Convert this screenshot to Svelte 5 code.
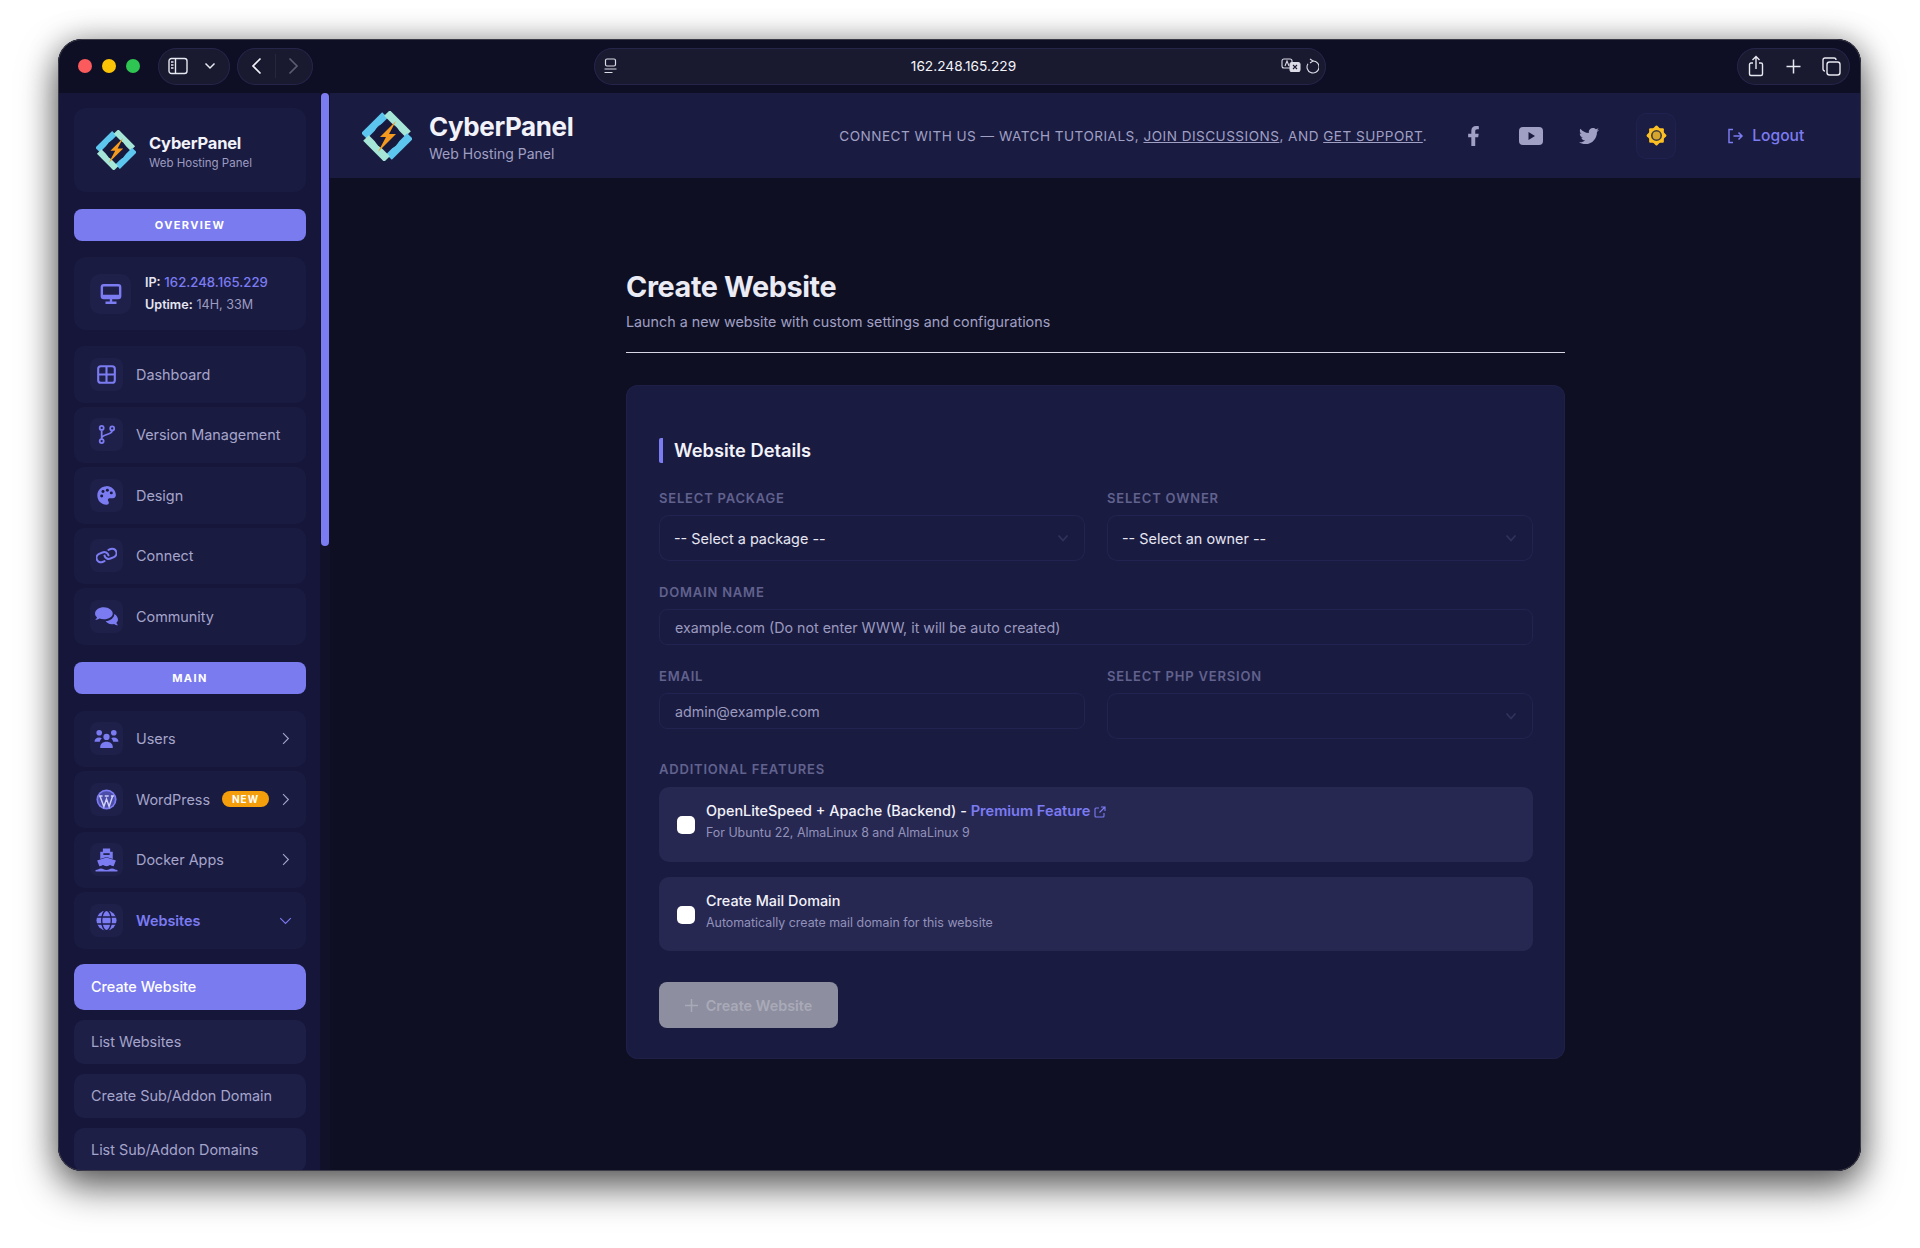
<script>
  const accent = "#7b7bf2";

  const overview = [
    { label: "Dashboard", icon: "dashboard" },
    { label: "Version Management", icon: "branch" },
    { label: "Design", icon: "palette" },
    { label: "Connect", icon: "link" },
    { label: "Community", icon: "comments" },
  ];

  const main = [
    { label: "Users", icon: "users", arrow: "right" },
    { label: "WordPress", icon: "wordpress", arrow: "right", badge: "NEW" },
    { label: "Docker Apps", icon: "ship", arrow: "right" },
    { label: "Websites", icon: "globe", arrow: "down", open: true },
  ];

  const subItems = [
    { label: "Create Website", active: true },
    { label: "List Websites" },
    { label: "Create Sub/Addon Domain" },
    { label: "List Sub/Addon Domains" },
  ];
</script>

{#snippet logo(size)}
  <svg width={size} height={size} viewBox="0 0 50 50" aria-hidden="true">
    <path d="M2 25 23 4" stroke="#5cc6ee" stroke-width="8" />
    <path d="M25 2 46 23" stroke="#a6e6d6" stroke-width="8" />
    <path d="M48 25 27 46" stroke="#5cc6ee" stroke-width="8" />
    <path d="M4 27 25 48" stroke="#a6e6d6" stroke-width="8" />
    <circle cx="25" cy="25" r="13" fill="#171a3c" />
    <path d="M34 10 18 26h6l-8 15 18-18h-7z" fill="#f59a1e" />
  </svg>
{/snippet}

{#snippet navIcon(name)}
  <svg class="glyph" class:large={name === "users" || name === "comments" || name === "ship"} viewBox="0 0 24 24" aria-hidden="true">
    {#if name === "dashboard"}
      <g fill="none" stroke={accent} stroke-width="2.4">
        <rect x="2.5" y="2.5" width="19" height="19" rx="3" />
        <path d="M12 2.5v19M2.5 12h19" />
      </g>
    {:else if name === "branch"}
      <g fill="none" stroke={accent} stroke-width="2">
        <circle cx="6.5" cy="4.5" r="2.3" />
        <circle cx="6.5" cy="19.5" r="2.3" />
        <circle cx="18.5" cy="5" r="2.3" />
        <path d="M6.5 7v10M18.5 7.5c0 5.5-12 3.5-12 9" />
      </g>
    {:else if name === "palette"}
      <path
        fill={accent}
        d="M12 1.5C6 1.5 1.5 6.2 1.5 12S6 22.5 12 22.5c1.8 0 2.7-1 2.7-2.3 0-1.5-1.1-1.9-1.1-3.2 0-1.2 1-1.9 2.2-1.9h3.4c2.2 0 3.5-1.4 3.5-3.7 0-5.7-4.9-10.4-10.7-10.4z"
      />
      <g fill="#1a1b3f">
        <circle cx="6.5" cy="12.5" r="1.7" />
        <circle cx="8" cy="7.5" r="1.7" />
        <circle cx="13" cy="6" r="1.7" />
        <circle cx="17.5" cy="9" r="1.7" />
      </g>
    {:else if name === "link"}
      <g fill="none" stroke={accent} stroke-width="2.4" stroke-linecap="round" transform="rotate(22 12 12)">
        <path d="M10 13a5 5 0 0 0 7.54.54l3-3a5 5 0 0 0-7.07-7.07l-1.72 1.71" />
        <path d="M14 11a5 5 0 0 0-7.54-.54l-3 3a5 5 0 0 0 7.07 7.07l1.71-1.71" />
      </g>
    {:else if name === "comments"}
      <path
        fill={accent}
        d="M9.5 3C4.8 3 1 5.6 1 9c0 1.5.7 2.8 1.9 3.8-.3 1-1 1.8-1.8 2.5 1.7 0 3.1-.6 4.2-1.3 1.2.4 2.6.6 4.2.6 4.7 0 8.5-2.6 8.5-5.6S14.2 3 9.5 3z"
      />
      <path
        fill={accent}
        d="M19.5 9.5c0 3.7-3.7 6.5-8.3 6.9 1 1.9 3.2 3.1 5.8 3.1.8 0 1.6-.1 2.3-.3.9.7 2.2 1.2 3.7 1.2-.7-.6-1.3-1.4-1.5-2.3 1-.9 1.5-2 1.5-3.2 0-2.3-1.3-4.2-3.5-5.4z"
      />
    {:else if name === "users"}
      <g fill={accent}>
        <circle cx="5" cy="6.5" r="2.7" />
        <circle cx="19" cy="6.5" r="2.7" />
        <circle cx="12" cy="10.5" r="3" />
        <path d="M.5 15c0-2.2 1.7-4 4.5-4 1 0 1.9.2 2.5.7-1.1 1-1.7 2.2-1.9 3.3z" />
        <path d="M23.5 15c0-2.2-1.7-4-4.5-4-1 0-1.9.2-2.5.7 1.1 1 1.7 2.2 1.9 3.3z" />
        <path d="M6 20c0-2.9 2.3-5 6-5s6 2.1 6 5v1H6z" />
      </g>
    {:else if name === "wordpress"}
      <circle cx="12" cy="12" r="11.5" fill={accent} />
      <circle cx="12" cy="12" r="9.5" fill="#4b4ba8" />
      <path d="M4.5 8 9 20l3-8.5L15 20l4-12M3.5 8h4M10 8h4.5M17 8h3.5" fill="none" stroke="#cfcff8" stroke-width="1.7" />
    {:else if name === "ship"}
      <g fill={accent}>
        <path d="M8.5 1.5h7v3H18v7L12 9.5 6 11.5v-7h2.5z" />
        <path d="M3 13 12 10l9 3-2.2 5.5c-1.8 0-2.4-1.2-3.4-1.2s-1.700 1.2-3.4 1.2-2.4-1.2-3.4-1.2-1.600 1.2-3.4 1.2z" />
        <path d="M1.5 22c2.5 0 3-1.3 5.2-1.3S9.5 22 12 22s3-1.3 5.3-1.3 2.7 1.3 5.2 1.3v1.5H1.5z" />
      </g>
      <path d="M9 6.8h6" stroke="#1a1b3f" stroke-width="1.6" />
    {:else if name === "globe"}
      <circle cx="12" cy="12" r="11.5" fill={accent} />
      <g fill="none" stroke="#1d1d48" stroke-width="1.5">
        <ellipse cx="12" cy="12" rx="5.5" ry="11.5" />
        <path d="M.5 8h23M.5 16h23" />
      </g>
    {/if}
  </svg>
{/snippet}

{#snippet chevron(direction)}
  <svg class="chev" viewBox="0 0 16 16" fill="none" stroke="currentColor" stroke-width="1.4" aria-hidden="true">
    {#if direction === "down"}
      <path d="M1.5 5 8 11.5 14.5 5" />
    {:else}
      <path d="M5 1.5 11.5 8 5 14.5" />
    {/if}
  </svg>
{/snippet}

{#snippet selectArrow()}
  <svg class="select-arrow" viewBox="0 0 14 14" fill="none" stroke="#31325c" stroke-width="1.8" aria-hidden="true">
    <path d="M2.5 4.5 7 9.5l4.5-5" />
  </svg>
{/snippet}

<div class="page">
  <div class="window">
    <div class="toolbar">
      <div class="lights">
        <span class="light red"></span>
        <span class="light yellow"></span>
        <span class="light green"></span>
      </div>

      <div class="pill pill-side">
        <svg width="20" height="18" viewBox="0 0 20 18" fill="none" stroke="#e8e8f0" stroke-width="1.4">
          <rect x="1" y="1.5" width="18" height="15" rx="2.5" />
          <path d="M7.5 1.5v15M3 5h2.5M3 8h2.5M3 11h2.5" />
        </svg>
        <svg width="12" height="8" viewBox="0 0 12 8" fill="none" stroke="#e8e8f0" stroke-width="1.5">
          <path d="M1.5 1.5 6 6l4.5-4.5" />
        </svg>
      </div>

      <div class="pill pill-nav">
        <svg width="11" height="18" viewBox="0 0 11 18" fill="none" stroke="#f0f0f6" stroke-width="1.7">
          <path d="M9.5 1.5 2 9l7.5 7.5" />
        </svg>
        <span class="pill-sep"></span>
        <svg width="11" height="18" viewBox="0 0 11 18" fill="none" stroke="#5b5c72" stroke-width="1.7">
          <path d="M1.5 1.5 9 9l-7.5 7.5" />
        </svg>
      </div>

      <div class="pill url">
        <svg width="13" height="16" viewBox="0 0 13 16" fill="none" stroke="#dcdce6" stroke-width="1.2">
          <rect x="1.5" y="1" width="10" height="7" rx="1.5" />
          <path d="M.5 11h12M.5 14.5h8" />
        </svg>
        <span class="url-text">162.248.165.229</span>
        <svg width="38" height="18" viewBox="0 0 38 18" fill="none" stroke="#dcdce6" stroke-width="1.1">
          <rect x="1" y="2" width="10" height="9" rx="2" />
          <path d="M4 9l2-5 2 5" />
          <rect x="9" y="5.5" width="10" height="9" rx="2" fill="#dcdce6" />
          <path d="M12 8l4 4M16 8l-4 4" stroke="#1b1b33" />
          <path d="M32 4a6 6 0 1 1-5 2.700" />
          <path d="M29 2l3 2-3 2" />
        </svg>
      </div>

      <div class="pill pill-tabs">
        <svg width="16" height="22" viewBox="0 0 16 22" fill="none" stroke="#e8e8f0" stroke-width="1.4">
          <path d="M5 8H3a1.5 1.5 0 0 0-1.5 1.5V19A1.5 1.5 0 0 0 3 20.5h10a1.5 1.5 0 0 0 1.5-1.500V9.500A1.500 1.500 0 0 0 13 8h-2" />
          <path d="M8 14V1.5M4.500 5 8 1.500 11.500 5" />
        </svg>
        <svg width="15" height="15" viewBox="0 0 15 15" fill="none" stroke="#e8e8f0" stroke-width="1.5">
          <path d="M7.5 .5v14M.5 7.5h14" />
        </svg>
        <svg width="19" height="19" viewBox="0 0 19 19" fill="none" stroke="#e8e8f0" stroke-width="1.4">
          <rect x="5" y="5" width="13" height="13" rx="2.5" />
          <path d="M3 14a2 2 0 0 1-2-2V3a2 2 0 0 1 2-2h9a2 2 0 0 1 2 2" />
        </svg>
      </div>
    </div>

    <div class="body">
      <aside class="sidebar">
        <div class="brand-card">
          {@render logo(40)}
          <div class="brand-text">
            <div class="brand-name">CyberPanel</div>
            <div class="brand-sub">Web Hosting Panel</div>
          </div>
        </div>

        <div class="section-btn">OVERVIEW</div>

        <div class="server-card">
          <div class="server-icon">
            <svg width="22" height="22" viewBox="0 0 24 24" fill="none" stroke={accent} stroke-width="2.6">
              <rect x="2" y="2.5" width="20" height="14" rx="2" />
              <path d="M12 17v4M6 21.5h12M2 14h20" />
            </svg>
          </div>
          <div class="server-text">
            <div><b>IP:</b> <span class="ip">162.248.165.229</span></div>
            <div><b>Uptime:</b> <span class="uptime">14H, 33M</span></div>
          </div>
        </div>

        <nav class="nav">
          {#each overview as item}
            <div class="nav-item">
              <span class="nav-icon">{@render navIcon(item.icon)}</span>
              <span class="nav-label">{item.label}</span>
            </div>
          {/each}
        </nav>

        <div class="section-btn">MAIN</div>

        <nav class="nav">
          {#each main as item}
            <div class="nav-item" class:open={item.open}>
              <span class="nav-icon">{@render navIcon(item.icon)}</span>
              <span class="nav-label">{item.label}</span>
              {#if item.badge}
                <span class="badge">{item.badge}</span>
              {/if}
              {@render chevron(item.arrow)}
            </div>
          {/each}
        </nav>

        <div class="sub-nav">
          {#each subItems as sub}
            <div class="sub-item" class:active={sub.active}>{sub.label}</div>
          {/each}
        </div>
      </aside>

      <div class="track"><div class="thumb"></div></div>

      <div class="content">
        <header class="topbar">
          <div class="top-brand">
            {@render logo(50)}
            <div class="top-text">
              <div class="top-name">CyberPanel</div>
              <div class="top-sub">Web Hosting Panel</div>
            </div>
          </div>

          <p class="connect">
            CONNECT WITH US — WATCH TUTORIALS, <a href="#top">JOIN DISCUSSIONS</a>, AND <a href="#top">GET SUPPORT</a>.
          </p>

          <svg class="social fb" viewBox="0 0 320 512" aria-hidden="true">
            <path d="M279.14 288l14.22-92.66h-88.91v-60.13c0-25.35 12.42-50.06 52.24-50.06h40.42V6.26S260.43 0 225.36 0c-73.22 0-121.08 44.38-121.08 124.72v70.62H22.89V288h81.39v224h100.17V288z" />
          </svg>
          <svg class="social yt" viewBox="0 0 24 18" aria-hidden="true">
            <path fill-rule="evenodd" d="M4 0h16a4 4 0 0 1 4 4v10a4 4 0 0 1-4 4H4a4 4 0 0 1-4-4V4a4 4 0 0 1 4-4zm5.5 5v8l6.5-4z" />
          </svg>
          <svg class="social tw" viewBox="0 0 512 512" aria-hidden="true">
            <path d="M459.37 151.716c.325 4.548.325 9.097.325 13.645 0 138.72-105.583 298.558-298.558 298.558-59.452 0-114.68-17.219-161.137-47.106 8.447.974 16.568 1.299 25.34 1.299 49.055 0 94.213-16.568 130.274-44.832-46.132-.975-84.792-31.188-98.112-72.772 6.498.974 12.995 1.624 19.818 1.624 9.421 0 18.843-1.3 27.614-3.573-48.081-9.747-84.143-51.98-84.143-102.985v-1.299c13.969 7.797 30.214 12.67 47.431 13.319-28.264-18.843-46.781-51.005-46.781-87.391 0-19.492 5.197-37.36 14.294-52.954 51.655 63.675 129.3 105.258 216.365 109.807-1.624-7.797-2.599-15.918-2.599-24.04 0-57.828 46.782-104.934 104.934-104.934 30.213 0 57.502 12.67 76.67 33.137 23.715-4.548 46.456-13.32 66.599-25.34-7.798 24.366-24.366 44.833-46.132 57.827 21.117-2.273 41.584-8.122 60.426-16.243-14.292 20.791-32.161 39.308-52.628 54.253z" />
          </svg>

          <div class="theme-btn">
            <svg width="21" height="21" viewBox="0 0 20 20" aria-hidden="true">
              <g fill="#fbbf24">
                <rect x="3" y="3" width="14" height="14" rx="1" />
                <rect x="3" y="3" width="14" height="14" rx="1" transform="rotate(45 10 10)" />
              </g>
              <circle cx="10" cy="10" r="5.2" fill="#3a3a3e" />
              <circle cx="10" cy="10" r="3.7" fill="#d5a52e" />
            </svg>
          </div>

          <div class="logout">
            <svg width="17" height="16" viewBox="0 0 17 16" fill="none" stroke={accent} stroke-width="1.5">
              <path d="M6 1.5H2v13h4M6.5 8H15M11.5 4.5 15 8l-3.5 3.5" />
            </svg>
            <span>Logout</span>
          </div>
        </header>

        <main class="main">
          <div class="wrap">
            <h1>Create Website</h1>
            <p class="subtitle">Launch a new website with custom settings and configurations</p>
            <hr />

            <section class="card">
              <h2>Website Details</h2>

              <div class="grid">
                <div class="field">
                  <label for="pkg">SELECT PACKAGE</label>
                  <div class="select" id="pkg">-- Select a package --{@render selectArrow()}</div>
                </div>
                <div class="field">
                  <label for="owner">SELECT OWNER</label>
                  <div class="select" id="owner">-- Select an owner --{@render selectArrow()}</div>
                </div>
                <div class="field wide">
                  <label for="domain">DOMAIN NAME</label>
                  <input id="domain" type="text" placeholder="example.com (Do not enter WWW, it will be auto created)" />
                </div>
                <div class="field">
                  <label for="email">EMAIL</label>
                  <input id="email" type="text" placeholder="admin@example.com" />
                </div>
                <div class="field">
                  <label for="php">SELECT PHP VERSION</label>
                  <div class="select" id="php">{@render selectArrow()}</div>
                </div>
              </div>

              <div class="features">
                <div class="features-label">ADDITIONAL FEATURES</div>
                <div class="feature">
                  <input type="checkbox" />
                  <div class="feature-text">
                    <div class="feature-title">
                      OpenLiteSpeed + Apache (Backend) - <a href="#top">Premium Feature</a>
                      <svg width="12" height="12" viewBox="0 0 12 12" fill="none" stroke={accent} stroke-width="1.1">
                        <path d="M5 2H2a1 1 0 0 0-1 1v7a1 1 0 0 0 1 1h7a1 1 0 0 0 1-1V7M7 1h4v4M11 1 5.5 6.5" />
                      </svg>
                    </div>
                    <div class="feature-sub">For Ubuntu 22, AlmaLinux 8 and AlmaLinux 9</div>
                  </div>
                </div>
                <div class="feature">
                  <input type="checkbox" />
                  <div class="feature-text">
                    <div class="feature-title">Create Mail Domain</div>
                    <div class="feature-sub">Automatically create mail domain for this website</div>
                  </div>
                </div>
              </div>

              <button class="submit" disabled>
                <svg width="13" height="13" viewBox="0 0 13 13" fill="none" stroke="#a9aab8" stroke-width="1.5">
                  <path d="M6.5 0v13M0 6.5h13" />
                </svg>
                Create Website
              </button>
            </section>
          </div>
        </main>
      </div>
    </div>
  </div>
</div>

<style>
  :global(body) {
    background: #fff;
    font-family: Inter, "Liberation Sans", sans-serif;
  }

  .page {
    height: 1248px;
    padding: 39px 59px 77px 58px;
    box-sizing: border-box;
    overflow: hidden;
  }

  .window {
    position: relative;
    height: 100%;
    display: flex;
    flex-direction: column;
    overflow: hidden;
    border-radius: 24px;
    background: #0f0f23;
    box-shadow:
      0 16px 38px rgba(0, 0, 0, 0.6),
      0 0 30px rgba(0, 0, 0, 0.25);
  }

  /* hairline round the window, over everything */
  .window::after {
    content: "";
    position: absolute;
    inset: 0;
    border: 1px solid #3b3b48;
    border-radius: 24px;
    pointer-events: none;
  }

  /* browser chrome */
  .toolbar {
    flex: 0 0 54px;
    display: flex;
    align-items: center;
    padding: 0 11px 0 20px;
    background: #0e0e24;
    box-sizing: border-box;
  }

  .lights {
    display: flex;
    gap: 10px;
    margin-right: 18px;
  }

  .light {
    width: 14px;
    height: 14px;
    border-radius: 50%;
  }

  .red { background: #fb5b5d; }
  .yellow { background: #fcc406; }
  .green { background: #2fc552; }

  .pill {
    height: 37px;
    display: flex;
    align-items: center;
    border-radius: 19px;
    box-sizing: border-box;
    background: #191930;
    box-shadow: inset 0 0 0 1px #25254a;
  }

  .pill-side {
    width: 72px;
    padding: 0 14px 0 10px;
    justify-content: space-between;
    margin-right: 7px;
  }

  .pill-nav {
    width: 76px;
    padding: 0 14px;
    justify-content: space-between;
  }

  .pill-sep {
    width: 1px;
    height: 24px;
    background: #26263f;
  }

  .url {
    flex: 0 0 732px;
    margin-left: 281px;
    padding: 0 7px 0 10px;
    justify-content: space-between;
  }

  .url-text {
    margin-left: 29px;
    color: #f4f4f8;
    font-size: 13.7px;
  }

  .pill-tabs {
    width: 113px;
    padding: 0 9px 0 11px;
    margin-left: auto;
    justify-content: space-between;
  }

  /* layout */
  .body {
    flex: 1;
    min-height: 0;
    display: flex;
  }

  .sidebar {
    flex: 0 0 262px;
    box-sizing: border-box;
    padding: 15px 14px 0 16px;
    background: #16163a;
    overflow: hidden;
  }

  .track {
    flex: 0 0 10px;
    background: #11112a;
  }

  .thumb {
    width: 8px;
    height: 453px;
    margin: 0 1px;
    border-radius: 4px;
    background: #7b7bf2;
  }

  .content {
    flex: 1;
    min-width: 0;
    display: flex;
    flex-direction: column;
  }

  /* sidebar */
  .brand-card {
    height: 84px;
    display: flex;
    align-items: center;
    gap: 13px;
    padding-left: 22px;
    box-sizing: border-box;
    border-radius: 12px;
    background: #1a1b41;
  }

  .brand-text {
    padding-top: 4px;
  }

  .brand-name {
    color: #f2f2fa;
    font-size: 16.5px;
    font-weight: 700;
    line-height: 20px;
    letter-spacing: -0.2px;
  }

  .brand-sub {
    margin-top: 2px;
    color: #9c9cc0;
    font-size: 11.5px;
    line-height: 16px;
  }

  .section-btn {
    height: 32px;
    margin: 17px 0 16px;
    display: flex;
    align-items: center;
    justify-content: center;
    border-radius: 8px;
    background: #7a7bef;
    color: #fff;
    font-size: 11px;
    font-weight: 700;
    letter-spacing: 1.4px;
  }

  .section-btn + .nav {
    margin-top: 17px;
  }

  .server-card {
    height: 73px;
    margin-bottom: 16px;
    display: flex;
    align-items: center;
    gap: 14px;
    padding-left: 16px;
    box-sizing: border-box;
    border-radius: 12px;
    background: #1a1b41;
  }

  .server-icon {
    width: 41px;
    height: 40px;
    display: flex;
    align-items: center;
    justify-content: center;
    border-radius: 10px;
    background: #1f2049;
  }

  .server-text {
    color: #e6e6f2;
    font-size: 13.2px;
    line-height: 20.5px;
  }

  .server-text b {
    font-weight: 600;
    font-size: 12.6px;
  }

  .ip {
    color: #7b7bf2;
    font-weight: 500;
  }

  .uptime {
    color: #9c9cc0;
    font-size: 12.6px;
  }

  .nav {
    display: flex;
    flex-direction: column;
    gap: 4px;
  }

  .nav-item {
    height: 56.5px;
    display: flex;
    align-items: center;
    padding: 0 14px 0 16px;
    box-sizing: border-box;
    border-radius: 10px;
    background: #1a1b41;
    color: #a5a5cb;
    font-size: 14.4px;
  }

  .nav-icon {
    width: 33px;
    height: 33px;
    flex: none;
    display: flex;
    align-items: center;
    justify-content: center;
    margin-right: 13px;
    border-radius: 8px;
    background: #1f2049;
  }

  .glyph {
    width: 21px;
    height: 21px;
  }

  .glyph.large {
    width: 25px;
    height: 25px;
  }

  .nav-label {
    flex: 1;
    white-space: nowrap;
  }

  .nav-item.open .nav-label {
    color: #7b7bf2;
    font-weight: 600;
  }

  .chev {
    width: 13px;
    height: 13px;
    flex: none;
  }

  .nav-item.open .chev {
    color: #7b7bf2;
  }

  .badge {
    width: 47px;
    height: 16px;
    margin-right: 10px;
    display: flex;
    align-items: center;
    justify-content: center;
    border-radius: 8px;
    background: #f59e0b;
    color: #fff;
    font-size: 10px;
    font-weight: 700;
    letter-spacing: 1px;
  }

  .sub-nav {
    margin-top: 15px;
    display: flex;
    flex-direction: column;
    gap: 10px;
  }

  .sub-item {
    height: 44px;
    padding-left: 17px;
    display: flex;
    align-items: center;
    flex: none;
    border-radius: 10px;
    background: #1e1f47;
    color: #a5a5cb;
    font-size: 14.4px;
  }

  .sub-item.active {
    height: 46px;
    background: #7a7bef;
    color: #fff;
    font-weight: 500;
  }

  /* header */
  .topbar {
    flex: 0 0 85px;
    display: flex;
    align-items: center;
    padding-left: 32px;
    box-sizing: border-box;
    background: #1a1b41;
  }

  .top-brand {
    display: flex;
    align-items: center;
    gap: 17px;
  }

  .top-text {
    padding-top: 2px;
  }

  .top-name {
    color: #f2f2fa;
    font-size: 26px;
    font-weight: 700;
    line-height: 32px;
    letter-spacing: -0.4px;
  }

  .top-sub {
    margin-top: 2px;
    color: #a0a0c4;
    font-size: 14px;
    line-height: 18px;
  }

  .connect {
    margin: 0 0 0 266px;
    color: #a0a0c4;
    font-size: 13.55px;
    letter-spacing: 0.49px;
    white-space: nowrap;
  }

  .connect a {
    color: inherit;
    text-decoration: underline;
  }

  .social {
    height: 20px;
    fill: #a0a0c4;
    flex: none;
  }

  .fb {
    width: 13px;
    margin-left: 40px;
  }

  .yt {
    width: 24px;
    height: 18px;
    margin-left: 39px;
  }

  .tw {
    width: 20px;
    margin-left: 36px;
  }

  .theme-btn {
    width: 40px;
    height: 46px;
    margin-left: 37px;
    display: flex;
    align-items: center;
    justify-content: center;
    border-radius: 10px;
    background: #1c1d44;
    box-shadow: inset 0 0 0 1px #202150;
  }

  .logout {
    margin-left: 51px;
    display: flex;
    align-items: center;
    gap: 8px;
    color: #7b7bf2;
    font-size: 15.6px;
    font-weight: 500;
  }

  /* page */
  .main {
    flex: 1;
    min-height: 0;
    padding-top: 91px;
    background: #0f0f23;
  }

  .wrap {
    width: 939px;
    margin: 0 auto;
  }

  h1 {
    margin: 0;
    color: #ebebf5;
    font-size: 28.8px;
    font-weight: 700;
    line-height: 36px;
    letter-spacing: -0.4px;
  }

  .subtitle {
    margin: 7px 0 0;
    color: #a0a0c4;
    font-size: 14.3px;
    line-height: 20px;
  }

  hr {
    height: 1px;
    margin: 20px 0 32px;
    border: 0;
    background: #d6d6e4;
  }

  .card {
    height: 674px;
    box-sizing: border-box;
    padding: 53px 32px 0 33px;
    border-radius: 12px;
    background: #1a1b41;
    box-shadow: inset 0 0 0 1px #1f2048;
  }

  h2 {
    margin: 0 0 27px;
    padding-left: 11px;
    border-left: 4px solid #7b7bf2;
    border-radius: 2px;
    color: #f2f2fa;
    font-size: 18.3px;
    font-weight: 600;
    line-height: 25px;
  }

  .grid {
    display: grid;
    grid-template-columns: 426px 426px;
    column-gap: 22px;
    row-gap: 23px;
  }

  .wide {
    grid-column: 1 / -1;
  }

  .field label,
  .features-label {
    display: block;
    margin-bottom: 9px;
    color: #61628e;
    font-size: 13px;
    font-weight: 600;
    line-height: 16px;
    letter-spacing: 0.8px;
  }

  .select {
    height: 46px;
    display: flex;
    align-items: center;
    justify-content: space-between;
    padding: 0 15px;
    box-sizing: border-box;
    border-radius: 10px;
    box-shadow: inset 0 0 0 1px #222350;
    color: #e6e6f2;
    font-size: 14.4px;
  }

  .select-arrow {
    width: 14px;
    height: 14px;
    margin-left: auto;
  }

  .field input {
    width: 100%;
    height: 36px;
    padding: 0 15px;
    box-sizing: border-box;
    border: 1px solid #222350;
    border-radius: 8px;
    background: transparent;
    font: inherit;
    font-size: 14.25px;
    outline: none;
  }

  .field input::placeholder {
    color: #9a9abf;
    opacity: 1;
  }

  .features {
    margin-top: 22px;
  }

  .features-label {
    margin-bottom: 10px;
  }

  .feature {
    height: 74.5px;
    margin-bottom: 15px;
    display: flex;
    align-items: center;
    gap: 11px;
    padding-left: 18px;
    box-sizing: border-box;
    border-radius: 10px;
    background: #272852;
  }

  .feature input {
    appearance: none;
    width: 18px;
    height: 18px;
    margin: 2px 0 0;
    flex: none;
    border-radius: 5px;
    background: #fff;
  }

  .feature-text {
    margin-bottom: 6px;
  }

  .feature-title {
    color: #f2f2fa;
    font-size: 14.4px;
    font-weight: 500;
    line-height: 20px;
  }

  .feature-title a {
    color: #7b7bf2;
    font-size: 14.6px;
    font-weight: 600;
    text-decoration: none;
  }

  .feature-title svg {
    vertical-align: -2px;
  }

  .feature-sub {
    margin-top: 4px;
    color: #9292ba;
    font-size: 12.4px;
    line-height: 16px;
  }

  .submit {
    width: 179px;
    height: 46px;
    margin-top: 31px;
    display: flex;
    align-items: center;
    justify-content: center;
    gap: 8px;
    border: 0;
    border-radius: 8px;
    background: #8d8e9f;
    color: #a9aab8;
    font: inherit;
    font-size: 14.4px;
    font-weight: 600;
  }
</style>
